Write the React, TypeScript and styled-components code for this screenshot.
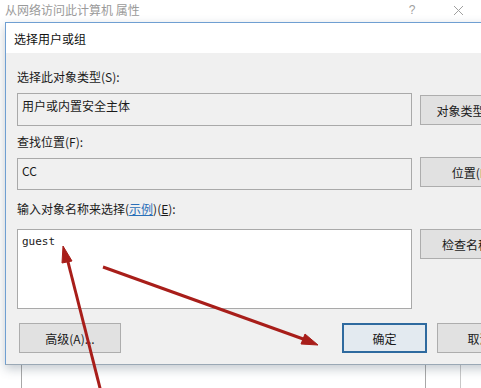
import React, { FC } from 'react';
import styled, { createGlobalStyle } from 'styled-components';

const GlobalStyle = createGlobalStyle`
  html, body {
    margin: 0;
    padding: 0;
    overflow: hidden;
    background: #ffffff;
  }
  body {
    font-family: "Noto Sans CJK SC", "Noto Sans", sans-serif;
    font-size: 12px;
    color: #1a1a1a;
  }
`;

const Screen = styled.div`
  position: relative;
  width: 481px;
  height: 388px;
  overflow: hidden;
  background: #ffffff;
`;

// parent window behind the dialog
const ParentWindow = styled.div`
  display: flex;
  flex-direction: column;
  height: 100%;
`;

const ParentTitleBar = styled.div`
  display: flex;
  align-items: center;
  height: 20px;
  padding-left: 5px;
  color: #9a9a9a;
  font-size: 12px;
  line-height: 16px;
`;

const ParentTitle = styled.span`
  flex: 1;
`;

const TitleControl = styled.span<{ width: number }>`
  display: flex;
  align-items: center;
  justify-content: center;
  width: ${({ width }) => width}px;
  color: #a0a0a0;
  font-family: "Liberation Sans", sans-serif;
  font-size: 12px;
`;

const ParentBody = styled.div`
  flex: 1;
  display: flex;
  padding-top: 300px;
  padding-left: 21px;
`;

const ListBox = styled.div`
  width: 413px;
  border-left: 1px solid #a8a8a8;
  border-right: 1px solid #a8a8a8;
`;

const SideEdge = styled.div`
  margin-left: 34px;
  width: 20px;
  border-left: 1px solid #c8c8c8;
`;

// the dialog window lies over the parent
const Dialog = styled.div`
  position: absolute;
  left: 5px;
  top: 22px;
  width: 520px;
  height: 341px;
  display: flex;
  flex-direction: column;
  background: #f0f0f0;
  border: 1px solid #6f9fd2;
  border-bottom-color: #9aa8b5;
  box-shadow: 0 4px 10px rgba(60, 80, 100, 0.3);
`;

const DialogTitle = styled.div`
  display: flex;
  align-items: center;
  height: 30px;
  padding-left: 8px;
  background: #ffffff;
  color: #111;
  font-size: 12px;
`;

const DialogBody = styled.div`
  flex: 1;
  display: flex;
  flex-direction: column;
  padding: 16px 0 0 11px;
`;

const FieldLabel = styled.div<{ top: number; bottom: number }>`
  margin-top: ${({ top }) => top}px;
  margin-bottom: ${({ bottom }) => bottom}px;
  height: 16px;
  line-height: 16px;
  color: #1a1a1a;
`;

const Link = styled.span`
  color: #2a6fb8;
  text-decoration: underline;
`;

const Mnemonic = styled.span`
  text-decoration: underline;
`;

const FieldRow = styled.div`
  display: grid;
  grid-template-columns: 395px 108px;
  column-gap: 8px;
  align-items: start;
`;

const TextBox = styled.div<{ height: number; white?: boolean; mono?: boolean }>`
  box-sizing: border-box;
  height: ${({ height }) => height}px;
  padding: 4px 4px;
  background: ${({ white }) => (white ? '#ffffff' : '#f0f0f0')};
  border: 1px solid #a9a9a9;
  line-height: 16px;
  color: #1a1a1a;
  font-family: ${({ mono }) =>
    mono ? '"DejaVu Sans Mono", monospace' : '"Noto Sans CJK SC", sans-serif'};
  font-size: ${({ mono }) => (mono ? '11px' : '12px')};
`;

const Button = styled.button<{ width: number; primary?: boolean; offset?: number }>`
  box-sizing: border-box;
  width: ${({ width }) => width}px;
  height: 30px;
  margin-top: ${({ offset }) => offset ?? 0}px;
  padding: 0;
  background: ${({ primary }) => (primary ? '#e3eaf0' : '#e1e1e1')};
  border: ${({ primary }) => (primary ? '2px solid #2e6a9f' : '1px solid #adadad')};
  color: #1a1a1a;
  font-family: "Noto Sans CJK SC", sans-serif;
  font-size: 12px;
  white-space: nowrap;
  overflow: hidden;
`;

const ButtonBar = styled.div`
  display: flex;
  align-items: center;
  margin-top: 14px;
  padding-left: 2px;
`;

const Spacer = styled.div`
  flex: 0 0 221px;
`;

const Gap = styled.div`
  flex: 0 0 10px;
`;

const ArrowLayer = styled.svg`
  position: absolute;
  left: 0;
  top: 0;
  pointer-events: none;
`;

const CloseIcon: FC = () => (
  <svg width="11" height="11" viewBox="0 0 11 11">
    <path d="M1 1 L10 10 M10 1 L1 10" stroke="#a0a0a0" strokeWidth="1" fill="none" />
  </svg>
);

const App: FC = () => {
  return (
    <>
      <GlobalStyle />
      <Screen>
        <ParentWindow>
          <ParentTitleBar>
            <ParentTitle>从网络访问此计算机 属性</ParentTitle>
            <TitleControl width={46}>?</TitleControl>
            <TitleControl width={46}>
              <CloseIcon />
            </TitleControl>
          </ParentTitleBar>
          <ParentBody>
            <ListBox />
            <SideEdge />
          </ParentBody>
        </ParentWindow>

        <Dialog>
          <DialogTitle>选择用户或组</DialogTitle>
          <DialogBody>
            <FieldLabel top={0} bottom={8}>
              选择此对象类型(S):
            </FieldLabel>
            <FieldRow>
              <TextBox height={33}>用户或内置安全主体</TextBox>
              <Button width={108} offset={2}>
                对象类型(O)...
              </Button>
            </FieldRow>

            <FieldLabel top={8} bottom={8}>
              查找位置(F):
            </FieldLabel>
            <FieldRow>
              <TextBox height={32}>CC</TextBox>
              <Button width={112} offset={-1}>
                位置(L)...
              </Button>
            </FieldRow>

            <FieldLabel top={11} bottom={12}>
              输入对象名称来选择(<Link>示例</Link>)(<Mnemonic>E</Mnemonic>):
            </FieldLabel>
            <FieldRow>
              <TextBox height={80} white mono>
                guest
              </TextBox>
              <Button width={108}>检查名称(C)</Button>
            </FieldRow>

            <ButtonBar>
              <Button width={102}>高级(A)...</Button>
              <Spacer />
              <Button width={85} primary>
                确定
              </Button>
              <Gap />
              <Button width={85}>取消</Button>
            </ButtonBar>
          </DialogBody>
        </Dialog>

        <ArrowLayer width="481" height="388" viewBox="0 0 481 388">
          <g fill="#a81e1a" stroke="#a81e1a">
            <line x1="101" y1="392" x2="67" y2="258" strokeWidth="3" />
            <polygon points="63,246 72,261 62,263" strokeWidth="1" />
            <line x1="103" y1="267" x2="306" y2="340" strokeWidth="3" />
            <polygon points="318,345 301,344 305,334" strokeWidth="1" />
          </g>
        </ArrowLayer>
      </Screen>
    </>
  );
};

export default App;
